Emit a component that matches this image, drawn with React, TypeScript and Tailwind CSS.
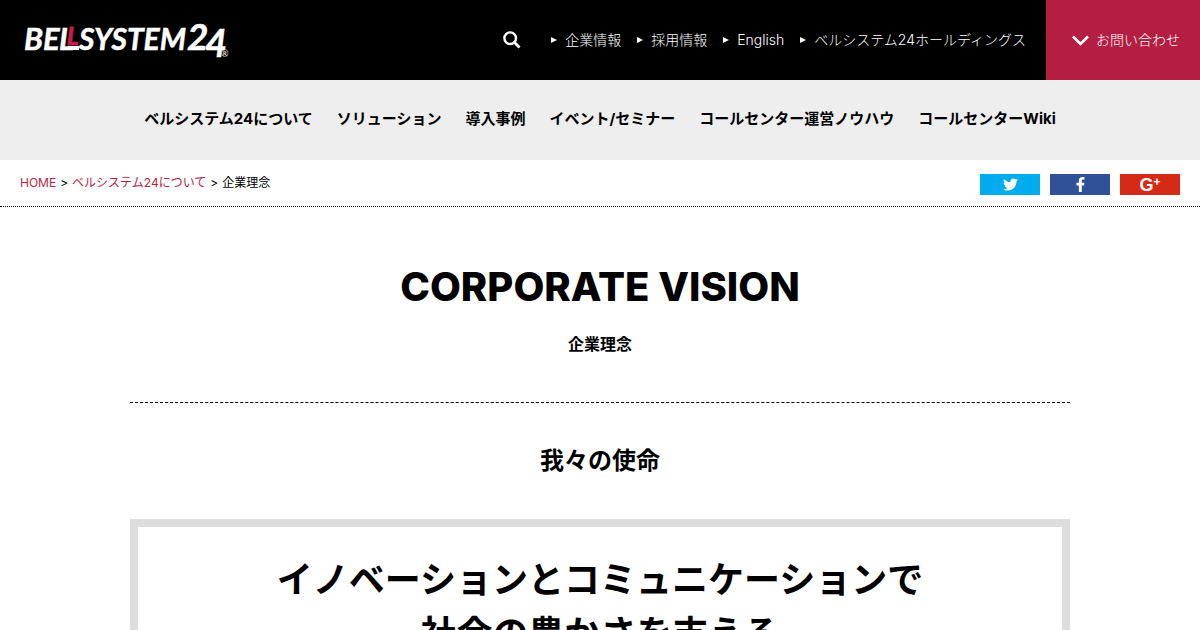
import { FaFacebookF, FaTwitter } from "react-icons/fa";

const headerLinks = ["企業情報", "採用情報", "English", "ベルシステム24ホールディングス"];

const navLinks = [
  "ベルシステム24について",
  "ソリューション",
  "導入事例",
  "イベント/セミナー",
  "コールセンター運営ノウハウ",
  "コールセンターWiki",
];

const Logo = () => (
  <svg
    width="212"
    height="60"
    viewBox="0 -10 212 60"
    role="img"
    aria-label="BELLSYSTEM24"
    className="font-[Lato] font-bold italic"
    fill="#fff"
  >
    <g stroke="#fff" strokeWidth="0.5">
      <text x="0" y="30" fontSize="31">B</text>
      <text x="19" y="30" fontSize="31">E</text>
      <text x="35" y="30" fontSize="31">L</text>
      <text x="55" y="30" fontSize="30">SYSTEM</text>
      <text x="163" y="30" fontSize="37">2</text>
      <text x="181" y="37" fontSize="38">4</text>
    </g>
    {/* foot of the white L, runs under the red one */}
    <rect x="44" y="26" width="11" height="4" />
    <text x="43" y="25" fontSize="24" fill="#c41e4a" stroke="#c41e4a">L</text>
    <text x="197" y="37" fontSize="9" fontStyle="normal" fontWeight="400">®</text>
  </svg>
);

const Header = () => (
  <header className="flex h-20 items-center justify-between bg-black text-sm font-light text-white">
    <a href="#" className="ml-6">
      <Logo />
    </a>
    <div className="flex items-center self-stretch">
      <button type="button" aria-label="検索" className="mr-[30px]">
        <svg width="18" height="18" viewBox="0 0 18 18" fill="none" stroke="#fff" strokeWidth="2.4">
          <circle cx="7.2" cy="7.2" r="5.8" />
          <path d="M11.3 11.3 16.5 16.5" strokeWidth="2.8" />
        </svg>
      </button>
      <nav className="flex gap-4">
        {headerLinks.map((label) => (
          <a key={label} href="#" className="flex items-center gap-2 whitespace-nowrap">
            <svg width="6" height="6" viewBox="0 0 6 6" fill="#fff">
              <path d="M0 0 6 3 0 6Z" />
            </svg>
            {label}
          </a>
        ))}
      </nav>
      <a
        href="#"
        className="ml-5 flex items-center gap-[7px] self-stretch whitespace-nowrap bg-[#b51e43] pr-5 pl-[26px]"
      >
        <svg width="17" height="11" viewBox="0 0 17 11" fill="none" stroke="#fff" strokeWidth="2.6">
          <path d="M1 1.5 8.5 9 16 1.5" />
        </svg>
        お問い合わせ
      </a>
    </div>
  </header>
);

const Breadcrumb = () => (
  <div className="flex items-start justify-between border-b border-dotted border-black px-5 pt-3.5 pb-[11px]">
    <nav aria-label="breadcrumb" className="flex gap-1 text-xs leading-[18px] text-black">
      <a href="#" className="text-[#b51e43]">HOME</a>
      <span>&gt;</span>
      <a href="#" className="text-[#b51e43]">ベルシステム24について</a>
      <span>&gt;</span>
      <span>企業理念</span>
    </nav>
    <div className="flex gap-2.5 text-white">
      <a href="#" aria-label="Twitter" className="flex h-[21px] w-15 items-center justify-center bg-[#00acee]">
        <FaTwitter size={15} />
      </a>
      <a href="#" aria-label="Facebook" className="flex h-[21px] w-15 items-center justify-center bg-[#305097]">
        <FaFacebookF size={15} />
      </a>
      <a
        href="#"
        aria-label="Google+"
        className="flex h-[21px] w-15 justify-center bg-[#d42a17] font-['Liberation_Sans',sans-serif] text-lg leading-[22px] font-bold"
      >
        G<span className="text-xs leading-4">+</span>
      </a>
    </div>
  </div>
);

const App = () => {
  return (
    <div
      lang="ja"
      className="h-screen overflow-hidden bg-white font-[Inter,'Noto_Sans_CJK_JP',sans-serif] text-black"
    >
      <Header />
      <nav className="flex h-20 items-center justify-center gap-6 bg-[#eee] pb-0.5 text-[15px] font-bold">
        {navLinks.map((label) => (
          <a key={label} href="#" className="whitespace-nowrap">
            {label}
          </a>
        ))}
      </nav>
      <Breadcrumb />

      <main className="mx-auto max-w-[940px] text-center">
        <div className="border-b border-dashed border-black pt-14 pb-[46px]">
          <h1 className="text-[40px] leading-12 font-extrabold">CORPORATE VISION</h1>
          <p className="mt-[21px] text-base font-bold">企業理念</p>
        </div>
        <h2 className="mt-10 text-2xl leading-9 font-bold">我々の使命</h2>
        <section className="mt-10 border-8 border-[#ddd] py-[26px] text-4xl leading-[54px] font-bold">
          <p>イノベーションとコミュニケーションで</p>
          <p>社会の豊かさを支える</p>
        </section>
      </main>
    </div>
  );
};

export default App;
